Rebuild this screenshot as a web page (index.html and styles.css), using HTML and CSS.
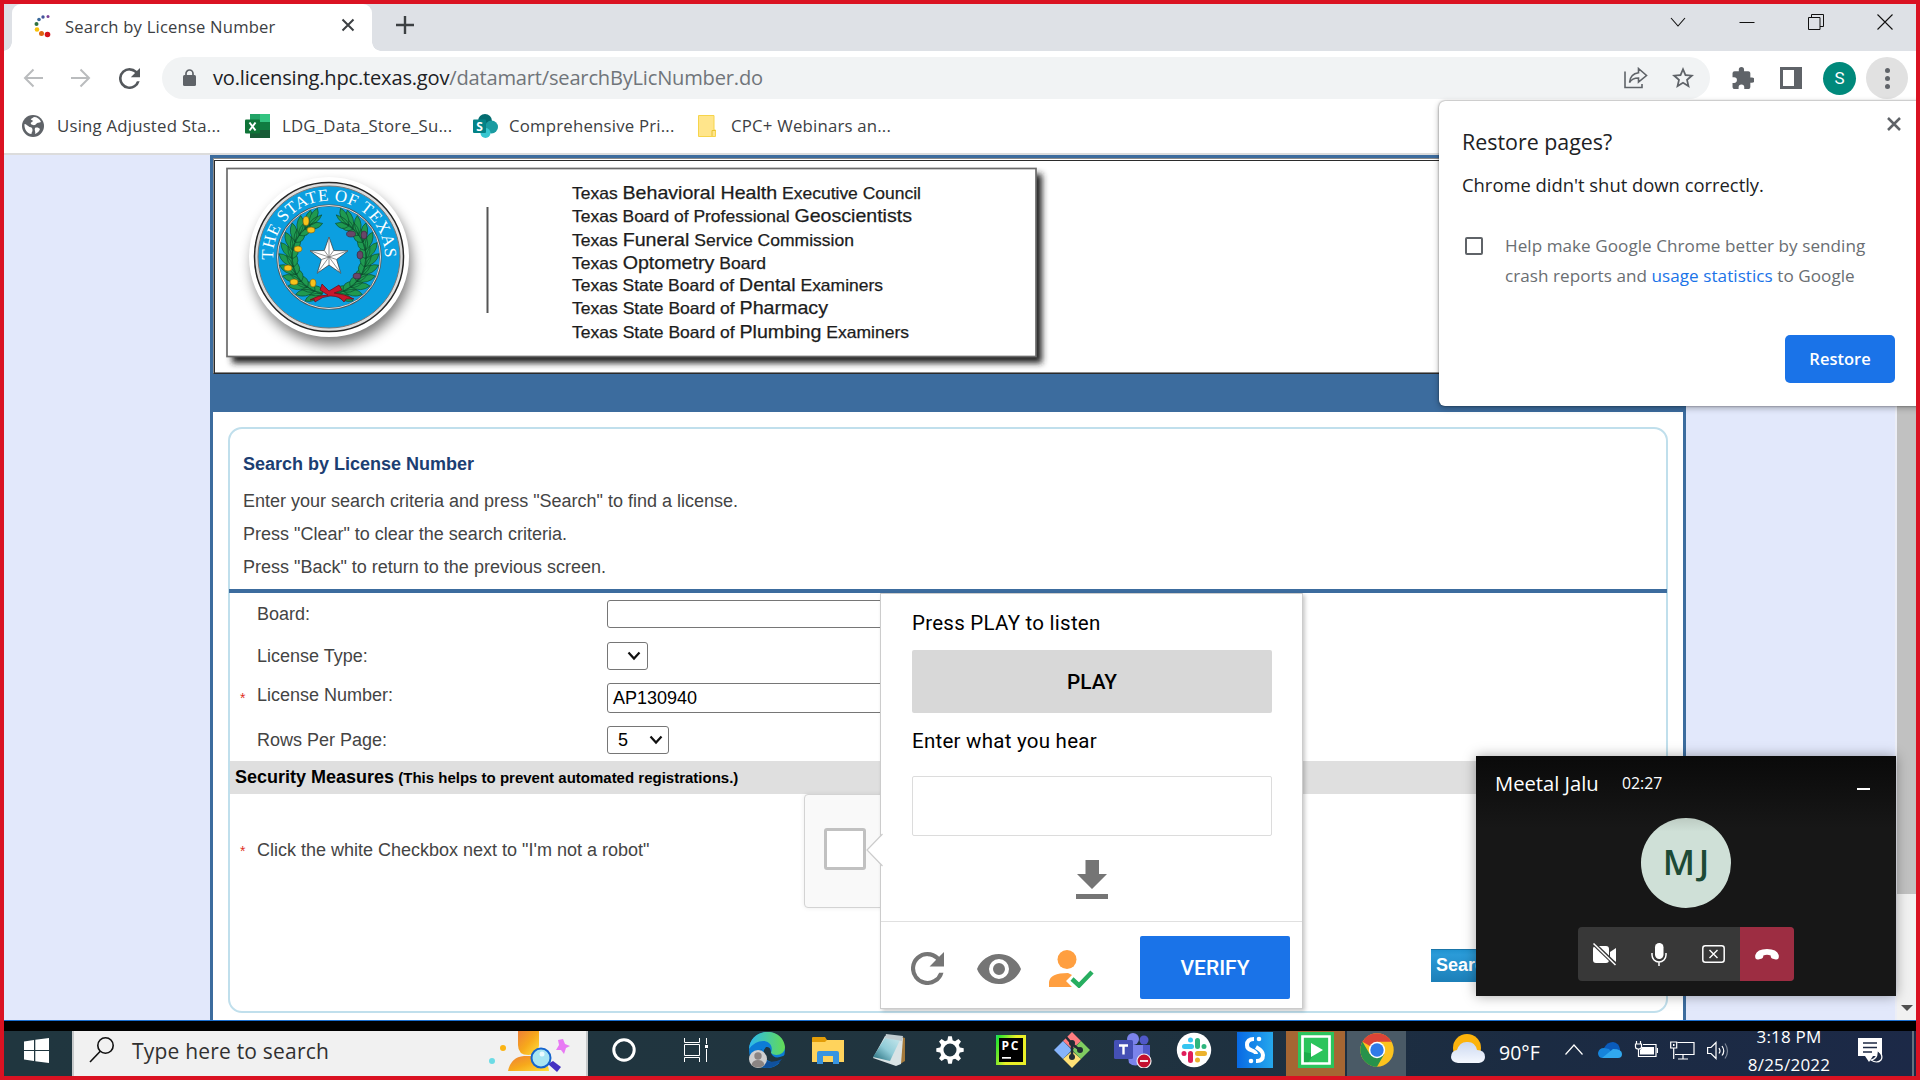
FILE: index.html
```html
<!DOCTYPE html>
<html lang="en">
<head>
<meta charset="utf-8">
<title>Search by License Number</title>
<link rel="stylesheet" href="styles.css">
</head>
<body>
<div class="screen">

  <header class="tabstrip">
    <div class="tab">
      <svg class="favicon" width="20" height="24" viewBox="0 0 20 24"><circle cx="15" cy="2.500" r="1.500" fill="#7b3f99"/><circle cx="10" cy="3" r="1.700" fill="#44549b"/><circle cx="6" cy="5.500" r="1.800" fill="#3a6a9c"/><circle cx="3.500" cy="10" r="2" fill="#2f7040"/><circle cx="4" cy="15.500" r="2.300" fill="#f9c20a"/><circle cx="8.500" cy="19.500" r="2.500" fill="#dd6512"/><circle cx="14.500" cy="20.500" r="2.800" fill="#d4121b"/></svg>
      <span class="tab-title">Search by License Number</span>
      <svg class="tab-close" width="14" height="14" viewBox="0 0 14 14"><path d="M1.500 1.500l11 11M12.500 1.500l-11 11" stroke="#3c4043" stroke-width="2"/></svg>
    </div>
    <svg class="new-tab" width="20" height="20" viewBox="0 0 20 20"><path d="M10 1v18M1 10h18" stroke="#3c4043" stroke-width="2.400"/></svg>
    <div class="window-buttons">
      <svg width="16" height="16" viewBox="0 0 16 16"><path d="M1 4l7 8 7-8" fill="none" stroke="#111" stroke-width="1.100"/></svg>
      <svg width="16" height="16" viewBox="0 0 16 16"><path d="M.5 8.500h15" stroke="#111"/></svg>
      <svg width="16" height="16" viewBox="0 0 16 16"><path d="M.5 3.500h11.500v12H.5zM3.500 3.500v-3h12v12H12" fill="none" stroke="#111"/></svg>
      <svg width="16" height="16" viewBox="0 0 16 16"><path d="M.5.5l15 15M15.500.5l-15 15" stroke="#111" stroke-width="1.100"/></svg>
    </div>
  </header>

  <div class="toolbar">
    <div class="nav">
      <svg width="20" height="20" viewBox="0 0 20 20"><path d="M20 10H2M10.500 1.500L2 10l8.500 8.500" fill="none" stroke="#babcbe" stroke-width="2"/></svg>
      <svg width="20" height="20" viewBox="0 0 20 20"><path d="M0 10h18M9.500 1.500L18 10l-8.500 8.500" fill="none" stroke="#babcbe" stroke-width="2"/></svg>
      <svg width="21" height="21" viewBox="4 4 16 16"><path fill="#54585c" d="M17.650 6.350A7.960 7.960 0 0 0 12 4a8 8 0 1 0 7.730 10h-2.080A6 6 0 1 1 12 6c1.660 0 3.140.69 4.220 1.780L13 11h7V4z"/></svg>
    </div>
    <div class="omnibox">
      <svg width="13" height="18" viewBox="0 0 13 18"><path d="M3 7V4.500a3.500 3.500 0 0 1 7 0V7" fill="none" stroke="#5f6368" stroke-width="1.700"/><rect y="6" width="13" height="11" rx="1.500" fill="#5f6368"/></svg>
      <span class="url"><b>vo.licensing.hpc.texas.gov</b>/datamart/searchByLicNumber.do</span>
      <svg class="share" width="24" height="22" viewBox="0 0 24 22"><path d="M1 4.500V20.500h17V17M14.500 1.500L22.500 8.500l-8 6.500v-4C10 11 7.500 12 5.500 15.500 6 10 9 6.500 14.500 5.800z" fill="none" stroke="#5f6368" stroke-width="1.600"/></svg>
      <svg class="star" width="22" height="22" viewBox="2 2 20 20"><path fill="#5f6368" d="M22 9.240l-7.190-.62L12 2 9.190 8.630 2 9.240l5.460 4.730L5.820 21 12 17.270 18.180 21l-1.630-7.030zM12 15.400l-3.760 2.270 1-4.280-3.320-2.880 4.380-.38L12 6.100l1.710 4.040 4.380.38-3.320 2.880 1 4.280z"/></svg>
    </div>
    <svg class="puzzle" width="22" height="22" viewBox="1.500 1 21 21"><path fill="#5f6368" d="M20.500 11H19V7c0-1.100-.9-2-2-2h-4V3.500a2.500 2.500 0 0 0-5 0V5H4a2 2 0 0 0-2 2v3.800h1.500a2.700 2.700 0 0 1 0 5.400H2V20c0 1.100.9 2 2 2h3.800v-1.500a2.700 2.700 0 0 1 5.400 0V22H17c1.100 0 2-.9 2-2v-4h1.500a2.500 2.500 0 0 0 0-5z"/></svg>
    <svg class="side-panel" width="22" height="22" viewBox="0 0 22 22"><path fill="#5f6368" fill-rule="evenodd" d="M0 0h22v22H0zM3 3v16h11V3z"/></svg>
    <span class="profile">S</span>
    <span class="menu"><i></i><i></i><i></i></span>
  </div>

  <nav class="bookmarks">
    <svg width="22" height="22" viewBox="0 0 22 22"><circle cx="11" cy="11" r="11" fill="#5f6368"/><path fill="#fff" d="M12 2c3 0 6 2 7 5-2 1-3 0-5 2-1 2-4 1-5 0-1-2 2-2 2-3S8 5 9 4zM2.500 9c2 0 3 2 5 3 2 0 3 1 3 3s-1 2-1 4C5 18.500 2 14 2.500 9zM13 13c2-1 4 0 5 1-1 3-3 4-5 5 1-2-1-4 0-6z"/></svg>
    <span class="bm1">Using Adjusted Sta...</span>
    <svg width="25" height="24" viewBox="0 0 25 24"><path fill="#21a366" d="M5 0h20v8H5z"/><path fill="#33c481" d="M15 0h10v8H15z"/><path fill="#107c41" d="M5 8h20v8H5z"/><path fill="#185c37" d="M5 16h20v8H5z"/><rect y="5.500" width="15" height="14" rx="1" fill="#0f7438"/><path d="M4.500 8.500l6 8M10.500 8.500l-6 8" stroke="#fff" stroke-width="2"/></svg>
    <span class="bm2">LDG_Data_Store_Su...</span>
    <svg width="25" height="24" viewBox="0 0 25 24"><circle cx="12" cy="7" r="7" fill="#036c70"/><circle cx="18.500" cy="13" r="6.500" fill="#1a9ba1"/><circle cx="12.500" cy="19" r="5" fill="#37c6d0"/><rect y="5.500" width="13" height="13.500" rx="1" fill="#038387"/><text x="3.300" y="16.500" font-family="Open Sans,sans-serif" font-weight="700" font-size="12" fill="#fff">S</text></svg>
    <span class="bm3">Comprehensive Pri...</span>
    <svg width="18" height="22" viewBox="0 0 18 22"><path fill="#ffe58b" stroke="#f6d44b" d="M.5.5h15.500V15h1.500v6.500H.5z"/><path d="M14 21v-5.500h3.500" fill="none" stroke="#e8c232"/></svg>
    <span class="bm4">CPC+ Webinars an...</span>
  </nav>

  <main class="viewport">
    <div class="site">
      <div class="banner">
        <svg class="banner-art" width="840" height="208" viewBox="218 162 840 208">
          <defs>
            <filter id="soft" x="-20%" y="-20%" width="140%" height="140%"><feGaussianBlur stdDeviation="3"/></filter>
            <filter id="softer" x="-20%" y="-20%" width="140%" height="140%"><feGaussianBlur stdDeviation="7"/></filter>
            <path id="motto" d="M-55.900 3a56 56 0 1 1 111.800 0"/>
            <g id="leaves" fill="#1f9a50" stroke="#0b4a2c" stroke-width=".6">
              <path d="M-4-37q4-11 15-12q-1 10-15 12zM-4-37q4-6 16-4q-7 6-16 4zM-4-36q5-4 13 3q-9 5-13-3z"/>
            </g>
            <g id="branch">
              <path d="M12 36A38 38 0 0 0 14-35" fill="none" stroke="#13693f" stroke-width="10" transform="scale(-1 1)"/>
              <use href="#leaves" transform="rotate(196)"/><use href="#leaves" transform="rotate(209)"/><use href="#leaves" transform="rotate(222)"/><use href="#leaves" transform="rotate(235)"/><use href="#leaves" transform="rotate(248)"/><use href="#leaves" transform="rotate(261)"/><use href="#leaves" transform="rotate(274)"/><use href="#leaves" transform="rotate(287)"/><use href="#leaves" transform="rotate(300)"/><use href="#leaves" transform="rotate(313)"/><use href="#leaves" transform="rotate(326)"/><use href="#leaves" transform="rotate(334)"/>
            </g>
          </defs>
          <rect x="232" y="174" width="810" height="189" fill="#222" filter="url(#soft)"/>
          <rect x="227" y="168.500" width="809" height="188" fill="#fff" stroke="#6b6b6b" stroke-width="1.700"/>
          <circle cx="332" cy="265" r="79" fill="#000" opacity=".55" filter="url(#softer)"/>
          <g transform="translate(329 257)">
            <circle r="80" fill="#fff"/>
            <circle r="74.500" fill="#ddd" stroke="#262626" stroke-width="1.500"/>
            <circle r="71" fill="#0b9fe0" stroke="#777" stroke-width="1"/>
            <circle r="51.500" fill="#0b9fe0" stroke="#555" stroke-width="2.200"/>
            <circle r="51.500" fill="none" stroke="#ddd" stroke-width="1"/>
            <text font-family="Liberation Serif,serif" font-size="17" fill="#fff"><textPath href="#motto" textLength="180">THE STATE OF TEXAS</textPath></text>
            <use href="#branch"/><use href="#branch" transform="scale(-1 1)"/>
            <g fill="#f6c21c" stroke="#7a5a10" stroke-width=".6"><ellipse cx="-23" cy="-36" rx="3" ry="4.500"/><ellipse cx="-18" cy="-27" rx="4" ry="3"/><ellipse cx="-31" cy="-8" rx="4" ry="3"/><ellipse cx="-41" cy="11" rx="4" ry="3"/><ellipse cx="-35" cy="25" rx="4" ry="3"/><ellipse cx="-16" cy="26" rx="3" ry="4"/></g>
            <g fill="#6a4668" stroke="#33233a" stroke-width=".6"><ellipse cx="22" cy="-23" rx="4.500" ry="3"/><ellipse cx="35" cy="-22" rx="3" ry="4"/><ellipse cx="31" cy="-2" rx="3" ry="4"/><ellipse cx="28" cy="19" rx="4" ry="3"/></g>
            <path fill="#c7162b" stroke="#650b18" stroke-width=".7" d="M0 34l-7-7-2 6 8 5q-10 0-18 5l4-1 1 3q8-6 15-6h1q9 0 13 6l2-3 8 0q-9-5-20-6l8-3-3-5z"/>
            <path fill="#fff" stroke="#333" stroke-width=".7" d="M0-20l4.700 13.500 14.300.3L7.600 2.500l4.200 13.700L0 8l-11.800 8.200L-7.600 2.500-19-6.200l14.300-.3z"/>
            <path fill="none" stroke="#777" stroke-width=".8" d="M0-20V0L19-6.200M0 0l11.800 16.200M0 0l-11.800 16.200M0 0l-19-6.200M0 0l4.700-6.500M0 0l7.600 2.500M0 0v8M0 0l-7.600 2.500M0 0l-4.700-6.500"/>
          </g>
          <path d="M487.500 207v106" stroke="#555" stroke-width="2"/>
          <g class="boards">
            <text x="572" y="199" textLength="349" lengthAdjust="spacingAndGlyphs">Texas <tspan class="big">Behavioral Health</tspan> Executive Council</text>
            <text x="572" y="222" textLength="340" lengthAdjust="spacingAndGlyphs">Texas Board of Professional <tspan class="big">Geoscientists</tspan></text>
            <text x="572" y="246" textLength="282" lengthAdjust="spacingAndGlyphs">Texas <tspan class="big">Funeral</tspan> Service Commission</text>
            <text x="572" y="268.500" textLength="194" lengthAdjust="spacingAndGlyphs">Texas <tspan class="big">Optometry</tspan> Board</text>
            <text x="572" y="291" textLength="311" lengthAdjust="spacingAndGlyphs">Texas State Board of <tspan class="big">Dental</tspan> Examiners</text>
            <text x="572" y="314" textLength="256" lengthAdjust="spacingAndGlyphs">Texas State Board of <tspan class="big">Pharmacy</tspan></text>
            <text x="572" y="338" textLength="337" lengthAdjust="spacingAndGlyphs">Texas State Board of <tspan class="big">Plumbing</tspan> Examiners</text>
          </g>
        </svg>
      </div>
      <div class="band"></div>
      <section class="panel">
        <div class="intro">
          <h1>Search by License Number</h1>
          <p>Enter your search criteria and press "Search" to find a license.</p>
          <p>Press "Clear" to clear the search criteria.</p>
          <p>Press "Back" to return to the previous screen.</p>
        </div>
        <div class="row"><span class="req"></span><label>Board:</label><div class="field wide"></div></div>
        <div class="row"><span class="req"></span><label>License Type:</label><div class="field type"><svg width="14" height="10" viewBox="0 0 14 10"><path d="M1.500 1.500L7 7.500l5.500-6" fill="none" stroke="#111" stroke-width="2.200"/></svg></div></div>
        <div class="row raised"><span class="req">*</span><label>License Number:</label><div class="field wide number">AP130940</div></div>
        <div class="row"><span class="req"></span><label>Rows Per Page:</label><div class="field rows"><span>5</span><svg width="14" height="10" viewBox="0 0 14 10"><path d="M1.500 1.500L7 7.500l5.500-6" fill="none" stroke="#111" stroke-width="2.200"/></svg></div></div>
        <div class="security"><strong>Security Measures</strong> <span>(This helps to prevent automated registrations.)</span></div>
        <div class="robot"><span class="req">*</span><span class="robot-text">Click the white Checkbox next to "I'm not a robot"</span><div class="captcha"><span class="checkbox"></span></div></div>
        <div class="actions"><span class="search-btn">Search</span></div>
      </section>
    </div>
    <div class="scrollbar"><i class="thumb"></i><i class="down"></i></div>
  </main>

  <footer class="taskbar">
    <div class="start"><svg width="25" height="25" viewBox="0 0 25 25"><path fill="#fff" d="M0 3.500L10 2v10H0zM11.300 1.800L25 0v12H11.300zM0 13h10v10L0 21.500zM11.300 13H25v12l-13.700-1.800z"/></svg></div>
    <div class="search">
      <svg width="26" height="26" viewBox="0 0 26 26"><circle cx="16.500" cy="8.500" r="7.700" fill="none" stroke="#111" stroke-width="1.600"/><path d="M11.500 14L1 25" stroke="#111" stroke-width="1.600"/></svg>
      <span>Type here to search</span>
      <svg class="doodle" width="84" height="41" viewBox="0 0 84 41"><defs><linearGradient id="gold" x2="1" y2="1"><stop stop-color="#ed7f38"/><stop offset=".5" stop-color="#f7a91b"/><stop offset="1" stop-color="#ffe03d"/></linearGradient></defs><circle cx="15" cy="17" r="3" fill="#fbb414"/><circle cx="4" cy="30" r="3" fill="#6cdbe5"/><path d="M20 40q3-14 16-15h8q16 2 17 15z" fill="url(#gold)"/><path d="M30 0h21v14q0 10-10.500 10T30 14z" fill="url(#gold)"/><path d="M60 33l5-3 8 6-4 5z" fill="#4330c2"/><circle cx="53" cy="27" r="9.500" fill="#a8e5f3" stroke="#1565ce" stroke-width="2"/><circle cx="54" cy="23" r="2.500" fill="#e9fbff"/><path d="M75 8l2 5 5 2-4 2-2 6-3-4-5 0 3-5-1-5z" fill="#e879f4"/></svg>
    </div>
    <div class="cell sys"><svg width="24" height="24" viewBox="0 0 24 24"><circle cx="12" cy="12" r="10.200" fill="none" stroke="#fff" stroke-width="3"/></svg></div>
    <div class="cell sys"><svg width="24" height="24" viewBox="0 0 24 24"><path fill="none" stroke="#fff" d="M.5 0v4.500h15V0M.5 6.500h15v11H.5zM.5 24v-4.500h15V24M22.500 0v6M22.500 11v13"/><path fill="#fff" d="M21 7h3v3h-3z"/></svg></div>
    <div class="apps">
      <div class="cell"><svg width="36" height="36" viewBox="0 0 36 36"><defs><linearGradient id="sea"><stop stop-color="#2bb8ef"/><stop offset="1" stop-color="#63dc54"/></linearGradient></defs><circle cx="18" cy="18" r="18" fill="#0c7cd5"/><path d="M0 17C1-5 34-6 36 15c0 8-10 10-14 6 3-8-3-12-8-12Q6 9 0 17z" fill="url(#sea)"/><path d="M22 21q3 7 12 3l4-2v6l-4 2q-10 3-19-4-2-7 2-11 5-1 5 6z" fill="#20363f"/><path d="M13 17q-4 5 0 9 8 7 20 1-6 9-15 9-11-1-11-11 1-6 6-8z" fill="#10519d"/><circle cx="9" cy="27" r="9" fill="#cfcfcf"/><circle cx="9" cy="24" r="3.700" fill="#8b8583"/><path d="M2.500 33q1-5 6.500-5t6.500 5q-6 5-13 0z" fill="#8b8583"/></svg></div>
      <div class="cell"><svg width="32" height="27" viewBox="0 0 32 27"><path fill="#e39d08" d="M0 1q0-1 1-1h12l2 3v4H0z"/><path fill="#ffd35c" d="M0 5h13l2-2h17v22H0z"/><path fill="#3894e0" d="M5 27V16q0-2 2-2h18q2 0 2 2v11h-6v-8H11v8z"/></svg></div>
      <div class="cell"><svg width="34" height="32" viewBox="0 0 34 32"><defs><linearGradient id="note" x1="0" y1="1" x2="1" y2="0"><stop stop-color="#1d6676"/><stop offset=".5" stop-color="#8fcbd7"/><stop offset="1" stop-color="#c7e7ec"/></linearGradient></defs><path fill="#a2793b" d="M30 3l3 1v23l-5 3z"/><path fill="#d9e3e5" d="M13 2l18 2-2 26-5 2L1 24z"/><path fill="url(#note)" d="M13 4l15 2-10 21L1 23z"/><path fill="#bfcbcf" d="M14 0l17 2-1 5-17-3z"/></svg></div>
      <div class="cell"><svg width="28" height="28" viewBox="-14 -14 28 28"><circle r="8.300" fill="none" stroke="#fff" stroke-width="3.600"/><g fill="#fff"><path id="tooth" d="M-2.800-9l1-4.700h3.600l1 4.700z"/><use href="#tooth" transform="rotate(45)"/><use href="#tooth" transform="rotate(90)"/><use href="#tooth" transform="rotate(135)"/><use href="#tooth" transform="rotate(180)"/><use href="#tooth" transform="rotate(225)"/><use href="#tooth" transform="rotate(270)"/><use href="#tooth" transform="rotate(315)"/></g></svg></div>
      <div class="cell"><svg width="30" height="30" viewBox="0 0 30 30"><defs><linearGradient id="lime" x2="1" y2=".4"><stop stop-color="#21d789"/><stop offset=".1" stop-color="#2be32e"/><stop offset=".6" stop-color="#e9ef28"/></linearGradient></defs><path fill="url(#lime)" d="M0 0h30v30H0z"/><path d="M3 3h24v24H3z"/><text x="5.500" y="15" textLength="17" font-family="Open Sans,sans-serif" font-weight="700" font-size="12" fill="#fff">PC</text><path fill="#fff" d="M6 22h9v1.700H6z"/></svg></div>
      <div class="cell"><svg width="36" height="36" viewBox="0 0 36 36"><path fill="#ff7d80" d="M18 0l9 9-9 8-9-8z"/><path fill="#86b4fb" d="M9 9l9 9-9 9-9-9z"/><path fill="#80cc60" d="M27 9l9 9-9 9-9-9z"/><path fill="#ffe176" d="M18 19l9 8-9 9-9-9z"/><path d="M12 5l6 7v14M18 12l8 6" fill="none" stroke="#222c35" stroke-width="2.500"/><g fill="#222c35"><circle cx="18" cy="11" r="3"/><circle cx="26" cy="18" r="3"/><circle cx="18" cy="25" r="3"/></g></svg></div>
      <div class="cell"><svg width="38" height="36" viewBox="0 0 38 36"><circle cx="30" cy="8" r="4.500" fill="#5059c9"/><path fill="#5059c9" d="M25 13h11v12q-5 6-11 4z"/><circle cx="19" cy="7" r="6" fill="#7b83eb"/><path fill="#7b83eb" d="M12 13h17v18q-8 5-14 0z"/><rect y="8" width="19" height="19" rx="1.500" fill="#4550b5"/><path d="M5 13.500h9M9.500 13.500v9" stroke="#fff" stroke-width="2.400"/><circle cx="30" cy="29" r="7" fill="#c4102f" stroke="#eee" stroke-width="1.200"/><path d="M26 29h8" stroke="#fff" stroke-width="1.800"/></svg></div>
      <div class="cell"><svg width="36" height="36" viewBox="-18 -18 36 36"><circle r="17.200" fill="#fff"/><g stroke-width="5" stroke-linecap="round"><path stroke="#36c5f0" d="M-9.500-3.500h7M-3.500-10v0"/><path stroke="#2eb67d" d="M3.500-9.500v6M10-3.500v0"/><path stroke="#ecb22e" d="M3.500 3.500h7M3.500 10v0"/><path stroke="#e01e5a" d="M-3.500 3.500v7M-10 3.500v0"/></g></svg></div>
      <div class="cell"><svg width="36" height="36" viewBox="0 0 36 36"><defs><linearGradient id="blue"><stop stop-color="#0869e4"/><stop offset="1" stop-color="#25a8ed"/></linearGradient></defs><path fill="url(#blue)" d="M0 0h36v36H0z"/><path fill="none" stroke="#fff" stroke-width="4" d="M17 7q-7 0-7 6 0 4 4 5 5 2 5 4M19 15q7 4 7 8 0 6-6 6h-1"/><circle cx="22" cy="7" r="2.300" fill="#fff"/><circle cx="14" cy="29" r="2.300" fill="#fff"/></svg></div>
      <div class="cell orange"><svg width="36" height="36" viewBox="0 0 36 36"><path fill="#2bc45c" d="M0 0h36v36H0z"/><path fill="#1bac4b" d="M6 20l10 2-6 9H6z"/><path fill="none" stroke="#fff" stroke-width="2.700" d="M4.500 4.500h27v27h-27z"/><path fill="#fff" d="M13 11l12 7-12 7z"/></svg></div>
      <div class="cell active"><svg width="34" height="34" viewBox="-17 -17 34 34"><circle r="16.700" fill="#fcc31e"/><path fill="#dc4437" d="M0 0L-14.500-8.300A16.700 16.700 0 0 1 14.500-8.300H0z"/><path fill="#27924b" d="M-14.500-8.300A16.700 16.700 0 0 0 0 16.700L7.300 4-7.300 4z"/><circle r="8.200" fill="#fff"/><circle r="6.700" fill="#2f7ae8"/></svg></div>
    </div>
    <div class="tray">
      <svg class="weather" width="34" height="30" viewBox="0 0 34 30"><defs><linearGradient id="cloud" y2="1" x2="0"><stop stop-color="#cbd8f0"/><stop offset="1" stop-color="#f5f8ff"/></linearGradient></defs><circle cx="16" cy="14" r="14" fill="#fcb30c"/><path fill="url(#cloud)" d="M7 29q-7-1-7-6 0-6 6-7 3-9 11-8 7 0 9 8 8 0 8 7 0 5-6 6z"/></svg>
      <span class="temp">90°F</span>
      <svg class="up" width="18" height="11" viewBox="0 0 18 11"><path d="M.5 10.500L9 1l8.500 9.500" fill="none" stroke="#fff" stroke-width="1.200"/></svg>
      <svg class="cloud" width="24" height="17" viewBox="0 0 24 17"><path fill="#0a5bbb" d="M6 6q3-6 9-6 6 1 7 7v8H6z"/><path fill="#1684db" d="M0 11q1-5 6-5l5 1 7 9H5q-5 0-5-5z"/><path fill="#31a8ee" d="M4 16l11-9q9 0 9 5 0 4-4 4z"/></svg>
      <svg class="battery" width="24" height="18" viewBox="0 0 24 18"><path fill="none" stroke="#fff" stroke-width="1.200" d="M1.500 3h6v3q0 2-3 2t-3-2zM2.500 0v3M6.500 0v3M4.500 8v7.500H22v-12H9M23.500 7v5"/><path fill="#fff" d="M8 6h12v7.500H6V9q2-1 2-3z"/></svg>
      <svg class="network" width="25" height="20" viewBox="0 0 25 20"><path fill="none" stroke="#fff" stroke-width="1.200" d="M7.500 1.500h16.500v12H5M.7 1h6v6h-6zM3.700 7v11M13 13.500v4M8 18h10"/><path fill="#fff" d="M3 3h1.500v2H3z"/></svg>
      <svg class="sound" width="23" height="20" viewBox="0 0 23 20"><path fill="none" stroke="#fff" stroke-width="1.200" d="M.6 6.500H4l5-5v16l-5-5H.6zM12 7q2 3 0 5.500M15 5q3.500 5 0 9.500"/><path fill="none" stroke="#7d8797" stroke-width="1.200" d="M18 2.500q5 7.500 0 15"/></svg>
      <div class="clock"><span>3:18 PM</span><span>8/25/2022</span></div>
      <svg class="notice" width="26" height="25" viewBox="0 0 26 25"><path fill="#fff" d="M0 0h24v18h-9l-4 6-4-6H0z"/><path stroke="#1e2a44" stroke-width="1.300" d="M5 5h14M5 9.500h14M5 14h9"/><path fill="#1e2a44" stroke="#fff" stroke-width="1.200" d="M19 12q7 5 4 10-4 4-10 0 7-1 6-10z"/></svg>
      <i class="desktop-edge"></i>
    </div>
  </footer>

  <div class="challenge">
    <svg class="pointer" width="17" height="34" viewBox="0 0 17 34"><path d="M16.500 1L1 17l15.500 16" fill="#fff" stroke="#ccc" stroke-width="1.200"/></svg>
    <div class="challenge-body">
      <div class="prompt">Press PLAY to listen</div>
      <div class="play">PLAY</div>
      <div class="prompt hear">Enter what you hear</div>
      <div class="answer"></div>
      <svg class="download" width="32" height="39" viewBox="0 0 32 39"><path fill="#757575" d="M9.500 0h13.500v14h8L16 29 1 14h8.500zM0 34h32v5H0z"/></svg>
    </div>
    <div class="challenge-foot">
      <svg width="33" height="33" viewBox="4 4 16 16"><path fill="#757575" d="M17.650 6.350A7.960 7.960 0 0 0 12 4a8 8 0 1 0 7.730 10h-2.080A6 6 0 1 1 12 6c1.660 0 3.140.69 4.220 1.780L13 11h7V4z"/></svg>
      <svg class="eye" width="44" height="30" viewBox="1 4.500 22 15"><path fill="#757575" d="M12 4.500C7 4.500 2.730 7.610 1 12c1.730 4.390 6 7.500 11 7.500s9.270-3.110 11-7.500c-1.730-4.390-6-7.500-11-7.500zM12 17a5 5 0 1 1 0-10 5 5 0 0 1 0 10zm0-8a3 3 0 1 0 0 6 3 3 0 0 0 0-6z"/></svg>
      <svg class="person" width="45" height="38" viewBox="0 0 45 38"><circle cx="18" cy="9.500" r="9.500" fill="#ff9f40"/><path fill="#ff9f40" d="M0 37v-5q1-9 19-9l4 2-6 6 6 6z"/><path d="M23 29l7 6.500L43 22" fill="none" stroke="#27ae60" stroke-width="4.500"/></svg>
      <div class="verify">VERIFY</div>
    </div>
  </div>

  <div class="restore">
    <svg class="restore-close" width="14" height="14" viewBox="0 0 14 14"><path d="M1 1l12 12M13 1L1 13" stroke="#5f6368" stroke-width="2.500"/></svg>
    <h2>Restore pages?</h2>
    <p class="reason">Chrome didn't shut down correctly.</p>
    <div class="consent"><i></i><p><span>Help make Google Chrome better by sending</span><br><span>crash reports and <a>usage statistics</a> to Google</span></p></div>
    <div class="restore-btn">Restore</div>
  </div>

  <div class="call">
    <div class="call-head"><span class="caller">Meetal Jalu</span><span class="timer">02:27</span><i></i></div>
    <div class="avatar">MJ</div>
    <div class="controls">
      <span><svg width="24" height="23" viewBox="0 0 24 23"><rect y="3" width="16" height="17" rx="3" fill="#fff"/><path fill="#fff" d="M17 9l6-4v14l-6-4z"/><path d="M0 0l23 22" stroke="#383838" stroke-width="4"/><path d="M.5.5l22 21.500" stroke="#fff" stroke-width="1.500"/></svg></span>
      <span><svg width="16" height="23" viewBox="0 0 16 23"><rect x="4" width="8.500" height="16" rx="4.200" fill="#fff"/><path d="M1 10v2a7 7 0 0 0 14 0v-2M8 19v4" fill="none" stroke="#fff" stroke-width="1.500"/></svg></span>
      <span><svg width="23" height="18" viewBox="0 0 23 18"><rect x=".8" y=".8" width="21.400" height="16.400" rx="2.500" fill="none" stroke="#fff" stroke-width="1.500"/><path d="M7.500 5l8 8M15.500 5l-8 8" stroke="#fff" stroke-width="1.400"/></svg></span>
      <span class="hangup"><svg width="24" height="11" viewBox="0 0 24 11"><path fill="#fff" d="M.3 6Q2 0 12 0t11.700 6q.8 5-3 4.500L17 9.500q-1.500-.5-1.300-3Q12 5 8.300 6.500q.2 2.500-1.300 3l-3.700 1Q-.5 11 .3 6z"/></svg></span>
    </div>
  </div>
</div>
</body>
</html>
```
FILE: styles.css
```css
* { box-sizing: border-box; }
body { margin: 0; font-family: "Open Sans", sans-serif; }
h1, h2, p { margin: 0; font-weight: 400; }
svg { display: block; flex: none; }
span, label { white-space: nowrap; }

.screen {
  position: relative; width: 1920px; height: 1080px; overflow: hidden;
  border: 4px solid #da1222; background: #fff;
  display: flex; flex-direction: column;
}

/* Browser chrome */
.tabstrip { height: 47px; background: #dee1e6; display: flex; padding-left: 8px; flex: none; }
.tab { width: 360px; height: 47px; background: #fff; border-radius: 9px 9px 0 0; display: flex; padding: 10px 0 0 21px; position: relative; }
.tab::before, .tab::after { content: ""; position: absolute; bottom: 0; width: 9px; height: 9px; }
.tab::before { left: -9px; background: radial-gradient(circle at 0 0, transparent 8.5px, #fff 9px); }
.tab::after { right: -9px; background: radial-gradient(circle at 100% 0, transparent 8.5px, #fff 9px); }
.tab-title { margin-left: 12px; width: 213px; font-size: 16.6px; letter-spacing: .2px; line-height: 25px; color: #3c4043; }
.tab-close { margin: 4px 0 0 63px; }
.new-tab { margin: 11px 0 0 23px; }
.window-buttons { margin: 10px 23px 0 auto; display: flex; gap: 53px; }

.toolbar { height: 54px; flex: none; display: flex; align-items: center; }
.nav { display: flex; gap: 28px; padding-left: 19px; width: 158px; align-items: center; }
.omnibox { width: 1548px; height: 42px; border-radius: 21px; background: #f1f3f4; display: flex; align-items: center; padding-left: 21px; }
.url { margin-left: 17px; font-size: 20.1px; line-height: 42px; color: #70757a; width: 560px; letter-spacing: -.2px; }
.url b { font-weight: 400; color: #202124; }
.share { margin-left: 851px; }
.star { margin-left: 24px; }
.puzzle { margin-left: 22px; }
.side-panel { margin-left: 26px; }
.profile { margin-left: 21px; width: 33px; height: 33px; border-radius: 50%; background: #00897b; color: #fff; font: 17px/33px Roboto, sans-serif; text-align: center; }
.menu { margin-left: 10px; width: 42px; height: 42px; border-radius: 50%; background: #e1e1e1; display: flex; flex-direction: column; align-items: center; justify-content: center; gap: 3px; }
.menu i { width: 5px; height: 5px; border-radius: 50%; background: #5f6368; }

.bookmarks { height: 50px; flex: none; border-bottom: 2px solid #dcdcdc; display: flex; align-items: center; padding: 0 0 6px 18px; font-size: 16.800px; letter-spacing: .2px; color: #3c4043; line-height: 42px; }
.bookmarks .bm1 { margin-left: 13px; width: 188px; }
.bookmarks .bm2 { margin-left: 12px; width: 191px; }
.bookmarks .bm3 { margin-left: 11px; width: 189px; }
.bookmarks .bm4 { margin-left: 15px; }

/* Web page */
.viewport { height: 866px; flex: none; background: #e2e8fb; border-bottom: 1px solid #1b6fd0; display: flex; font-family: "Liberation Sans", sans-serif; }
.site { width: 1476px; height: 865px; margin-left: 206px; border: 3px solid #3c6c9e; border-bottom: 0; background: #fff; }
.banner { height: 216px; border: 1px solid #8a8a8a; border-bottom-color: #2b2b2b; box-shadow: inset 0 1px #fff, inset 1px 2px #2b2b2b, inset 0 -1px #8a8a8a; padding: 3px 0 0 4px; }
.boards { font: 16.5px "Liberation Sans", sans-serif; fill: #1c1c1c; stroke: #1c1c1c; stroke-width: .25px; }
.boards .big { font-size: 18.500px; }
.band { height: 38px; background: #3c6c9e; }
.panel { margin: 15px 0 0 15px; width: 1440px; height: 586px; border: 2px solid #c0dfec; border-radius: 14px; font-size: 18px; color: #444; }
.intro { height: 164px; border-bottom: 4px solid #3c6c9e; padding: 15px 0 0 14px; margin: 0 -1px; line-height: 33px; }
.intro h1 { font-size: 18px; font-weight: 700; line-height: 40px; height: 41px; color: #1c3e72; }
.row { height: 42px; display: flex; align-items: center; }
.row label { width: 350px; }
.req { width: 27px; padding-left: 10px; color: #e0301e; font-size: 14px; }
.raised label { padding-bottom: 6px; }
.field { height: 28px; border: 1px solid #767676; border-radius: 3px; background: #fff; color: #000; display: flex; align-items: center; padding-left: 5px; }
.wide { width: 400px; }
.number { height: 30px; }
.type { width: 41px; padding-left: 19px; }
.rows { width: 62px; padding-left: 10px; gap: 21px; }
.security { height: 33px; margin-right: -1px; background: #dfdfdf; color: #000; padding-left: 5px; line-height: 32px; font-size: 15px; font-weight: 700; }
.security strong { font-size: 18px; }
.robot { display: flex; align-items: center; }
.robot-text { width: 547px; padding-bottom: 2px; }
.captcha { width: 380px; height: 114px; border: 1px solid #d3d3d3; border-radius: 4px; background: #f9f9f9; box-shadow: 0 0 5px rgba(0,0,0,.08); padding: 33px 0 0 19px; }
.checkbox { display: block; width: 42px; height: 42px; border: 3px solid #c1c1c1; border-radius: 3px; background: #fff; }
.actions { padding: 41px 0 0 1201px; display: flex; }
.search-btn { width: 80px; height: 33px; background: linear-gradient(#2193d0, #2b9bd8 15%, #1c7fb8); border-top: 1px solid #1a75a8; color: #fff; font-weight: 700; padding-left: 5px; line-height: 31px; }
.scrollbar { width: 21px; margin-left: auto; background: #f1f1f1; border-left: 2px solid #eceef6; display: flex; flex-direction: column; justify-content: space-between; align-items: center; }
.thumb { width: 19px; height: 739px; background: #c1c1c1; }
.down { border: 6px solid transparent; border-top-color: #505050; border-bottom: 0; margin-bottom: 9px; }

/* Taskbar */
.taskbar { height: 55px; flex: none; border-top: 10px solid #000; background: linear-gradient(90deg, #20363f, #20343f 55%, #1b2b42 80%, #1c2947); display: flex; color: #fff; overflow: hidden; }
.start { width: 68px; padding: 7px 0 0 20px; }
.search { width: 516px; background: #f1f1f1; border: solid #c6c9ca; border-width: 0 2px; display: flex; color: #303030; }
.search > svg:first-child { margin: 6px 0 0 15px; }
.search span { margin: 0 0 0 17px; font-size: 21px; letter-spacing: .2px; line-height: 40px; width: 356px; }
.cell { width: 59px; height: 45px; display: flex; align-items: center; justify-content: center; padding-bottom: 7px; }
.cell.sys { width: 72px; }
.apps { display: flex; gap: 2px; margin-left: 5px; }
.orange { background: #a56633; }
.active { background: #4a5a66; }
.tray { display: flex; margin-left: 45px; }
.weather { margin-top: 3px; }
.temp { margin-left: 14px; width: 66px; font-size: 19.500px; line-height: 43px; }
.up { margin-top: 13px; }
.cloud { margin: 11px 0 0 15px; }
.battery { margin: 10px 0 0 12px; }
.network { margin: 10px 0 0 12px; }
.sound { margin: 10px 0 0 12px; }
.clock { margin: -9px 0 0 14px; width: 90px; display: flex; flex-direction: column; align-items: center; font-size: 17px; letter-spacing: .2px; line-height: 29px; height: 60px; }
.clock span { height: 28px; }
.notice { margin: 7px 0 0 24px; }
.desktop-edge { width: 2px; height: 45px; margin-left: 28px; background: #66707f; }

/* Audio challenge, floats over the form */
.challenge { position: absolute; left: 876px; top: 589px; width: 423px; height: 416px; background: #fff; border: 1px solid #ccc; box-shadow: 2px 2px 4px rgba(0,0,0,.22); font-family: Roboto, sans-serif; color: #000; }
.pointer { position: absolute; left: -15px; top: 239px; }
.challenge-body { height: 328px; border-bottom: 1px solid #e0e0e0; padding: 0 30px 0 31px; display: flex; flex-direction: column; }
.prompt { font-size: 20.500px; letter-spacing: .25px; line-height: 24px; padding-top: 17px; height: 56px; }
.play { height: 63px; border-radius: 2px; background: #d8d8d8; text-align: center; font-weight: 500; font-size: 20.800px; line-height: 64px; }
.hear { height: 63px; padding-top: 16px; }
.answer { height: 60px; border: 1px solid #dcdcdc; border-radius: 2px; }
.download { margin: 24px auto 0; }
.challenge-foot { display: flex; align-items: center; padding: 14px 12px 0 30px; }
.challenge-foot > svg { margin-top: 2px; }
.eye { margin-left: 33px; }
.person { margin-left: 28px; }
.verify { margin-left: auto; width: 150px; height: 63px; background: #1a73e8; border-radius: 2px; color: #fff; font-weight: 500; font-size: 21px; line-height: 64px; text-align: center; }

/* Restore prompt */
.restore { position: absolute; left: 1435px; top: 97px; width: 490px; height: 305px; border-radius: 6px; background: #fff; box-shadow: 0 0 2px rgba(0,0,0,.5), 0 2px 6px rgba(0,0,0,.3); padding: 23px 34px 0 23px; color: #202124; }
.restore-close { position: absolute; left: 448px; top: 16px; }
.restore h2 { font-size: 21.400px; line-height: 36px; height: 42px; }
.reason { font-size: 18.400px; line-height: 38px; height: 65px; }
.consent { display: flex; color: #6a6e72; font-size: 17.100px; letter-spacing: .05px; line-height: 30px; height: 104px; }
.consent i { width: 18px; height: 18px; border: 2px solid #5f6368; border-radius: 2px; margin: 6px 22px 0 3px; flex: none; }
.consent a { color: #1a73e8; }
.restore-btn { width: 110px; height: 48px; margin-left: 323px; border-radius: 5px; background: #1a73e8; color: #fff; font-size: 16.500px; font-weight: 600; line-height: 47px; text-align: center; }

/* Call window */
.call { position: absolute; left: 1472px; top: 752px; width: 420px; height: 240px; background: linear-gradient(#0a0a0a, #171717 30%); box-shadow: 0 0 12px rgba(0,0,0,.35); color: #fff; display: flex; flex-direction: column; align-items: center; }
.call-head { width: 420px; height: 62px; padding: 8px 26px 0 19px; display: flex; line-height: 39px; }
.caller { font-size: 20.200px; width: 127px; }
.timer { font-size: 15.800px; }
.call-head i { margin: 24px 0 0 auto; width: 13px; height: 2px; background: #fff; }
.avatar { width: 90px; height: 90px; border-radius: 50%; background: linear-gradient(#bccbc2, #cfe0d7 15%); color: #1d4a35; font-weight: 600; font-size: 35px; letter-spacing: 4px; text-indent: 4px; line-height: 88px; text-align: center; }
.controls { margin-top: 19px; display: flex; border-radius: 4px; overflow: hidden; background: #383838; }
.controls span { width: 54px; height: 54px; display: flex; align-items: center; justify-content: center; }
.controls .hangup { background: #9d2d42; }
```
